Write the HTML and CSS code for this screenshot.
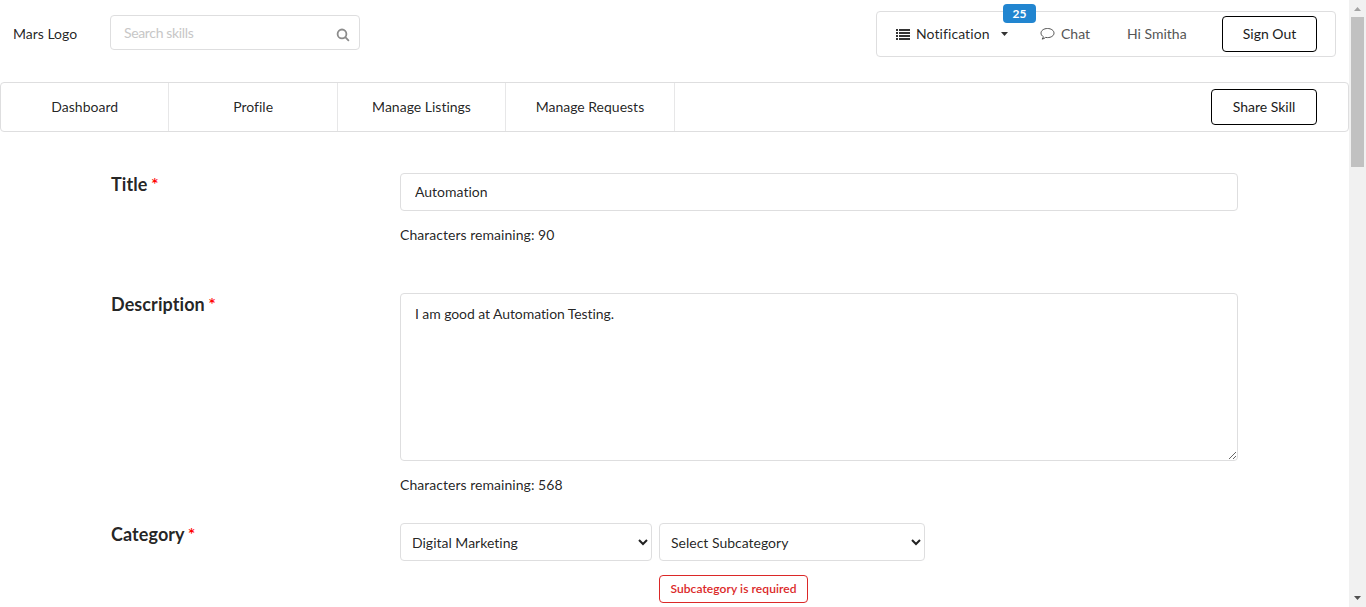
FILE: index.html
```html
<!DOCTYPE html>
<html lang="en">
<head>
<meta charset="utf-8">
<title>Share Skill</title>
<link rel="stylesheet" href="styles.css">
</head>
<body>
<div class="page">
  <header class="header">
    <a class="logo">Mars Logo</a>
    <div class="search">
      <input class="search-input" type="text" placeholder="Search skills">
      <svg class="search-icon" width="14" height="14" viewBox="0 0 14 14"><circle cx="6" cy="5.9" r="4.4"/><path d="M9.3 9.2 12.4 12.3"/></svg>
    </div>
    <div class="account">
      <div class="notification">
        <svg class="list-icon" width="14" height="11" viewBox="0 0 14 11"><path d="M0 0h2v2H0zM3 0h11v2H3zM0 3h2v2H0zM3 3h11v2H3zM0 6h2v2H0zM3 6h11v2H3zM0 9h2v2H0zM3 9h11v2H3z"/></svg>
        <span class="notification-text">Notification</span>
        <svg class="caret" width="7" height="4" viewBox="0 0 7 4"><path d="M0 0h7L3.500 4z"/></svg>
        <span class="badge">25</span>
      </div>
      <a class="chat">
        <svg class="chat-icon" width="15" height="14" viewBox="0 0 15 14"><path d="M7.5 1.5C3.8 1.5 1 3.5 1 6.1c0 1.5.9 2.8 2.4 3.6-.2 1-.7 1.7-1.4 2.4 1.500-.2 2.700-.8 3.600-1.700.6.1 1.200.2 1.900.2 3.700 0 6.500-1.900 6.500-4.500S11.200 1.500 7.500 1.500z"/></svg>
        <span>Chat</span>
      </a>
      <span class="greeting">Hi Smitha</span>
      <button class="button sign-out">Sign Out</button>
    </div>
  </header>
  <nav class="tabs">
    <a class="tab">Dashboard</a>
    <a class="tab">Profile</a>
    <a class="tab">Manage Listings</a>
    <a class="tab">Manage Requests</a>
    <button class="button share">Share Skill</button>
  </nav>
  <main class="form">
    <section class="row title-row">
      <h3 class="label">Title <span class="required">*</span></h3>
      <div class="field">
        <input class="control title-input" type="text" value="Automation">
        <p class="hint">Characters remaining: 90</p>
      </div>
    </section>
    <section class="row description-row">
      <h3 class="label">Description <span class="required">*</span></h3>
      <div class="field">
        <textarea class="control area" spellcheck="false">I am good at Automation Testing.</textarea>
        <p class="hint">Characters remaining: 568</p>
      </div>
    </section>
    <section class="row">
      <h3 class="label">Category <span class="required">*</span></h3>
      <div class="selects">
        <select class="control select category"><option>Digital Marketing</option></select>
        <div class="subcategory">
          <select class="control select"><option>Select Subcategory</option></select>
          <div class="error">Subcategory is required</div>
        </div>
      </div>
    </section>
  </main>
</div>
<aside class="scrollbar">
  <svg class="arrow arrow-up" width="7" height="4" viewBox="0 0 7 4"><path d="M0 4h7L3.500 0z"/></svg>
  <div class="thumb"></div>
  <svg class="arrow arrow-down" width="7" height="4" viewBox="0 0 7 4"><path d="M0 0h7L3.500 4z"/></svg>
</aside>
</body>
</html>
```
FILE: styles.css
```css
* {
  box-sizing: border-box;
}

body {
  margin: 0;
  display: flex;
  height: 607px;
  overflow: hidden;
  background: #fff;
  color: rgba(0, 0, 0, 0.87);
  font: 14px/20px Lato, sans-serif;
  font-variant-ligatures: none;
}

input, textarea, select, button {
  margin: 0;
  font: inherit;
  font-variant-ligatures: none;
  color: inherit;
}

.page {
  width: 1349px;
}

.header {
  display: flex;
  align-items: flex-start;
  height: 82px;
  padding: 11px 13px 0;
}

.logo {
  width: 97px;
  padding-top: 13px;
}

.search {
  display: flex;
  align-items: center;
  width: 250px;
  height: 35px;
  margin-top: 4px;
  padding: 0 9px 0 13px;
  border: 1px solid #dededf;
  border-radius: 4px;
}

.search-input {
  flex: 1;
  min-width: 0;
  padding: 0;
  border: 0;
  outline: 0;
  letter-spacing: -0.35px;
}

.search-input::placeholder {
  color: #c7c7c7;
}

.search-icon {
  margin-top: 4px;
  fill: none;
  stroke: #8c8c8c;
  stroke-width: 1.8;
  stroke-linecap: round;
}

.account {
  display: flex;
  align-items: center;
  width: 460px;
  height: 46px;
  margin-left: auto;
  padding: 0 18px 0 19px;
  border: 1px solid #dededf;
  border-radius: 4px;
}

.notification {
  position: relative;
  display: flex;
  align-items: center;
  width: 144px;
}

.list-icon {
  margin-right: 6px;
  fill: #333;
}

.notification-text {
  letter-spacing: 0.08px;
}

.caret {
  margin-left: 11px;
  fill: #333;
}

.badge {
  position: absolute;
  top: -20px;
  left: 107px;
  width: 33px;
  height: 19px;
  border-radius: 4px;
  background: #2185d0;
  color: #fff;
  font-size: 12px;
  font-weight: 700;
  line-height: 19px;
  text-align: center;
}

.chat {
  display: flex;
  align-items: center;
  width: 87px;
  color: #555;
}

.chat-icon {
  margin-right: 6px;
  fill: none;
  stroke: #555;
}

.greeting {
  color: #555;
}

.button {
  height: 36px;
  padding: 0;
  border: 1px solid #000;
  border-radius: 4px;
  background: #fff;
  color: #1b1b1b;
}

.sign-out {
  width: 95px;
  margin-left: auto;
}

.tabs {
  display: flex;
  align-items: center;
  height: 50px;
  padding-right: 31px;
  border: 1px solid #dededf;
  border-radius: 4px;
}

.tab {
  width: 168.42px;
  height: 48px;
  border-right: 1px solid #e7e7e8;
  line-height: 48px;
  text-align: center;
}

.share {
  width: 106px;
  margin-left: auto;
}

.form {
  padding: 41px 111px 0;
}

.row {
  display: flex;
}

.title-row {
  height: 120px;
}

.description-row {
  height: 230px;
}

.label {
  width: 289px;
  margin: 0;
  font-size: 18px;
  font-weight: 700;
  letter-spacing: 0.08px;
  line-height: 23px;
}

.required {
  margin-left: -1px;
  color: #f00;
  font-weight: 600;
}

.field {
  flex: 1;
}

.control {
  display: block;
  width: 100%;
  height: 38px;
  padding: 0 14px;
  border: 1px solid #dededf;
  border-radius: 4px;
  background: #fff;
  outline: 0;
}

.title-input {
  padding-bottom: 2px;
}

.area {
  height: 168px;
  padding: 11px 14px;
  letter-spacing: -0.08px;
  line-height: 18px;
  resize: vertical;
}

.hint {
  margin: 14px 0 0;
  letter-spacing: 0.04px;
}

.selects {
  display: flex;
  align-items: flex-start;
  gap: 7px;
}

.select {
  width: 266px;
  padding: 0 2px 0 7px;
}

.category {
  width: 252px;
}

.error {
  width: 149px;
  height: 28px;
  margin-top: 14px;
  border: 1px solid #db2828;
  border-radius: 4px;
  color: #db2828;
  font-size: 12px;
  font-weight: 600;
  letter-spacing: 0.08px;
  line-height: 26px;
  text-align: center;
}

.scrollbar {
  display: flex;
  flex-direction: column;
  align-items: center;
  width: 17px;
  height: 607px;
  padding: 7px 0;
  background: #f1f1f1;
}

.arrow-up {
  fill: #a3a3a3;
}

.arrow-down {
  margin-top: auto;
  fill: #505050;
}

.thumb {
  width: 13px;
  height: 150px;
  margin-top: 6px;
  background: #c1c1c1;
}
```
